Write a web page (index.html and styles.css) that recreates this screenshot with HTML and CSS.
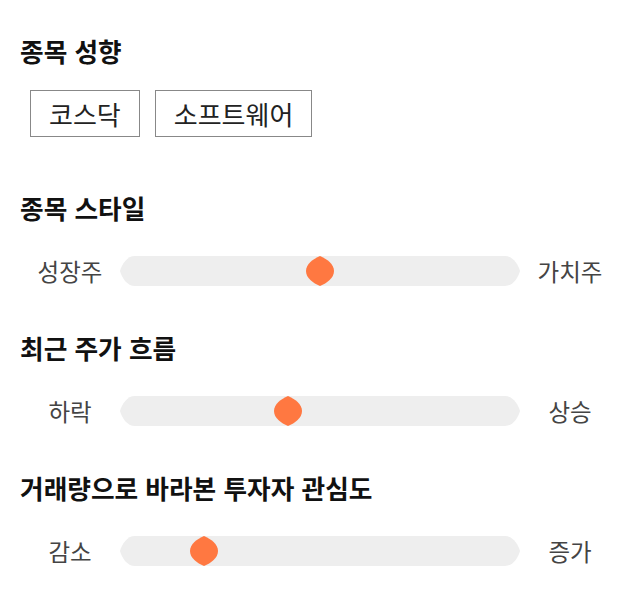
FILE: index.html
```html
<!DOCTYPE html>
<html lang="ko">
<head>
    <meta charset="UTF-8">
    <meta name="viewport" content="width=device-width, initial-scale=1.0">
    <title>종목 분석</title>
    <link rel="stylesheet" href="styles.css">
</head>
<body>
    <section class="section section-tags">
        <h2>종목 성향</h2>
        <div class="chips">
            <span class="chip">코스닥</span>
            <span class="chip">소프트웨어</span>
        </div>
    </section>

    <section class="section">
        <h2>종목 스타일</h2>
        <div class="slider-row">
            <span class="side">성장주</span>
            <div class="track">
                <div class="thumb" style="left: 50%;"></div>
            </div>
            <span class="side">가치주</span>
        </div>
    </section>

    <section class="section">
        <h2>최근 주가 흐름</h2>
        <div class="slider-row">
            <span class="side">하락</span>
            <div class="track">
                <div class="thumb" style="left: 42%;"></div>
            </div>
            <span class="side">상승</span>
        </div>
    </section>

    <section class="section">
        <h2>거래량으로 바라본 투자자 관심도</h2>
        <div class="slider-row">
            <span class="side">감소</span>
            <div class="track">
                <div class="thumb" style="left: 21%;"></div>
            </div>
            <span class="side">증가</span>
        </div>
    </section>
</body>
</html>
```

FILE: styles.css
```css
body {
    margin: 0;
    padding: 36px 20px 0;
    font-family: "Noto Sans CJK KR", "Noto Sans", sans-serif;
    background: #fff;
    color: #111;
}
h2 {
    margin: 0;
    font-size: 25.7px;
    line-height: 30px;
    font-weight: bold;
}
.section + .section {
    margin-top: 47px;
}
.section-tags {
    padding-bottom: 9px;
}
.chips {
    display: flex;
    gap: 15px;
    margin: 24px 0 0 10px;
}
.chip {
    border: 1px solid #888;
    padding: 0 18px;
    height: 45px;
    line-height: 45px;
    font-size: 26px;
    color: #222;
}
.slider-row {
    display: grid;
    grid-template-columns: 100px 1fr 100px;
    align-items: center;
    margin-top: 33px;
}
.side {
    text-align: center;
    font-size: 23.5px;
    line-height: 30px;
    color: #444;
}
.track {
    position: relative;
    height: 30px;
    background: #eeeeee;
    clip-path: path('M15 0 H385 C393 0 398 8 400 15 C398 22 393 30 385 30 H15 C7 30 2 22 0 15 C2 8 7 0 15 0 Z');
}
.thumb {
    position: absolute;
    top: 0;
    width: 28px;
    height: 30px;
    margin-left: -14px;
    background: #ff7841;
    clip-path: path('M14 0 C21 3 28 8 28 15 C28 22 21 27 14 30 C7 27 0 22 0 15 C0 8 7 3 14 0 Z');
}
```
